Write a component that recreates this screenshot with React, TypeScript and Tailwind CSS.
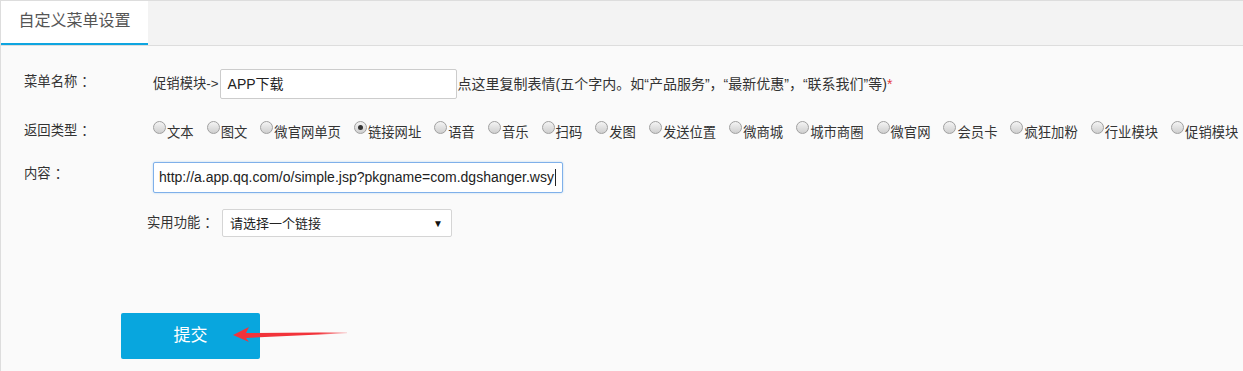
import { useState } from "react";

const TYPES = [
  "文本",
  "图文",
  "微官网单页",
  "链接网址",
  "语音",
  "音乐",
  "扫码",
  "发图",
  "发送位置",
  "微商城",
  "城市商圈",
  "微官网",
  "会员卡",
  "疯狂加粉",
  "行业模块",
  "促销模块",
];

const FONT = { fontFamily: '"Liberation Sans", "Noto Sans CJK SC", sans-serif' };

// Full-width punctuation held to a full em cell.
function Full({ ch, center }: { ch: string; center?: boolean }) {
  return (
    <span className={`inline-block w-[1em] ${center ? "text-center" : "text-left"}`}>
      {ch}
    </span>
  );
}

function Label({ text }: { text: string }) {
  return (
    <>
      {text}
      <span className="inline-block w-[1em] overflow-visible whitespace-nowrap pl-[4px]">：</span>
    </>
  );
}

function Radio({ checked }: { checked: boolean }) {
  return (
    <span className="relative mt-[-7px] inline-block h-[13px] w-[13px] shrink-0 rounded-full border border-[#a0a0a0] bg-gradient-to-b from-[#f4f4f4] to-[#cfcfcf]">
      {checked ? (
        <span className="absolute left-[3px] top-[3px] h-[5px] w-[5px] rounded-full bg-[#333]" />
      ) : null}
    </span>
  );
}

export default function App() {
  const [type, setType] = useState("链接网址");

  return (
    <div
      lang="zh-CN"
      style={FONT}
      className="h-[371px] w-[1243px] overflow-hidden border-l border-t border-[#dddddd] bg-[#fafafa] text-[13.33px] text-[#333]"
    >
      {/* Tab bar */}
      <div className="flex h-[45px] border-b border-[#dddddd] bg-[#f3f3f3]">
        <div className="flex h-[44px] w-[147px] items-center justify-center border-b-2 border-[#0ea5e0] bg-white pb-[2px] text-[16px] text-[#555]">
          自定义菜单设置
        </div>
      </div>

      {/* Form */}
      <div className="pl-[23px] pt-[23px]">
        {/* 菜单名称 */}
        <div className="flex h-[30px] items-center">
          <div className="w-[129px] pb-[4px]">
            <Label text="菜单名称" />
          </div>
          <span>促销模块-&gt;</span>
          <div className="ml-[1px] flex h-[30px] w-[237px] items-center rounded-[2px] border border-[#cccccc] bg-white pl-[7px] text-[14px] text-[#222]">
            APP下载
          </div>
          <span className="ml-[1px] whitespace-nowrap text-[14px]">
            点这里复制表情(五个字内<Full ch="。" />如“产品服务”
            <Full ch="，" center />“最新优惠”<Full ch="，" center />
            “联系我们”等)
            <span className="text-[#e4393c]">*</span>
          </span>
        </div>

        {/* 返回类型 */}
        <div className="mt-[20px] flex h-[24px] items-center">
          <div className="w-[129px] shrink-0">
            <Label text="返回类型" />
          </div>
          <div className="flex items-center whitespace-nowrap">
            {TYPES.map((t) => (
              <label
                key={t}
                onClick={() => setType(t)}
                className="mr-[13px] flex cursor-pointer items-center"
              >
                <Radio checked={type === t} />
                <span className="ml-[1px] mt-[3px]">{t}</span>
              </label>
            ))}
          </div>
        </div>

        {/* 内容 */}
        <div className="mt-[19px] flex">
          <div className="w-[129px] pt-[2px]">
            <Label text="内容" />
          </div>
          <div>
            <div className="flex h-[31px] w-[410px] items-center rounded-[2px] border border-[#7fb0ea] bg-white pl-[5px] text-[14px] text-[#222] shadow-[0_0_2px_rgba(102,175,233,0.5)]">
              http://a.app.qq.com/o/simple.jsp?pkgname=com.dgshanger.wsy
              <span className="ml-[1px] inline-block h-[17px] w-px bg-[#222]" />
            </div>
          </div>
        </div>

        {/* 实用功能 */}
        <div className="ml-[123px] mt-[16px] flex items-center">
          <span className="w-[75px]">
            <Label text="实用功能" />
          </span>
          <div className="flex h-[28px] w-[230px] items-center justify-between rounded-[2px] border border-[#d5d5d5] bg-white pl-[7px] pr-[8px] text-[13px] text-[#222]">
            <span className="mt-[2px]">请选择一个链接</span>
            <span className="text-[10px] text-[#111]">▼</span>
          </div>
        </div>

        {/* Submit */}
        <div className="relative ml-[97px] mt-[76px] w-fit">
          <button
            type="button"
            className="flex h-[46px] w-[139px] items-center justify-center rounded-[2px] bg-[#08a6de] text-[17px] text-white"
          >
            提交
          </button>
          <svg
            className="absolute left-[108px] top-[12px]"
            width="122"
            height="20"
            viewBox="0 0 122 20"
          >
            <defs>
              <linearGradient id="shaft" x1="0" x2="1" y1="0" y2="0">
                <stop offset="0" stopColor="#f2333a" />
                <stop offset="0.75" stopColor="#f2333a" />
                <stop offset="1" stopColor="#f2333a" stopOpacity="0.2" />
              </linearGradient>
            </defs>
            <path
              d="M4 10 L20 2 L17 8 L118 7.2 L118 8.2 L17 13 L20 17 Z"
              fill="url(#shaft)"
            />
          </svg>
        </div>
      </div>
    </div>
  );
}
